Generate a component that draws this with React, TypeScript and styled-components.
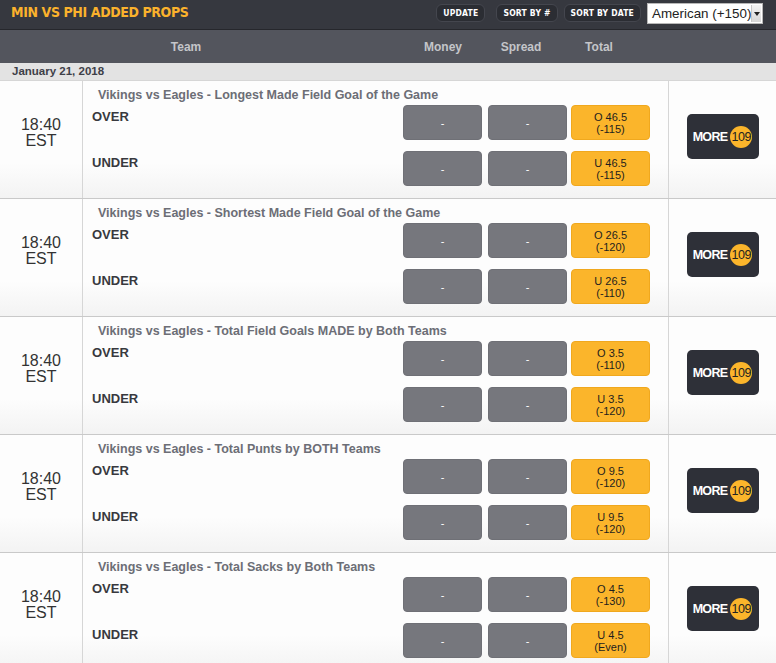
import React from "react";
import styled, { createGlobalStyle } from "styled-components";

const GlobalStyle = createGlobalStyle`
  body {
    margin: 0;
    background: #fafafa;
    font-family: "Liberation Sans", Arial, sans-serif;
  }
`;

const TopBar = styled.div`
  height: 29px;
  background: #36383f;
  border-bottom: 1px solid #26272c;
  display: flex;
  align-items: center;
  padding: 0 13px 0 11px;
`;

const PageTitle = styled.h1`
  margin: 0;
  flex: 1;
  font-family: "DejaVu Sans Condensed", "DejaVu Sans", sans-serif;
  font-weight: bold;
  font-size: 14px;
  letter-spacing: -0.4px;
  color: #fbb22c;
  margin-top: -6px;
`;

const BarButton = styled.button<{ $gap: number }>`
  height: 18px;
  margin-left: ${(p) => p.$gap}px;
  margin-top: -3px;
  padding: 0 6px;
  background: #2b2d33;
  border: 1px solid #44464e;
  border-radius: 6px;
  color: #fff;
  font-family: "DejaVu Sans Condensed", "DejaVu Sans", sans-serif;
  font-weight: bold;
  font-size: 8.5px;
  letter-spacing: 0.2px;
`;

const Select = styled.div`
  margin-left: 6px;
  margin-top: -2px;
  width: 116px;
  height: 21px;
  box-sizing: border-box;
  background: #fff;
  border: 1px solid #b8b8b8;
  display: flex;
  align-items: center;
  font-size: 13.4px;
  color: #222;
  padding-left: 4px;
  white-space: nowrap;
`;

const SelectText = styled.span`
  flex: 1;
`;

const SelectArrow = styled.span`
  width: 13px;
  height: 17px;
  margin-right: 1px;
  background: linear-gradient(#f4f4f4, #d6d6d6);
  border-left: 1px solid #c8c8c8;
  display: flex;
  align-items: center;
  justify-content: center;
  &::after {
    content: "";
    border-left: 3.5px solid transparent;
    border-right: 3.5px solid transparent;
    border-top: 4px solid #222;
  }
`;

const HeaderRow = styled.div`
  height: 33px;
  background: #53555d;
  display: grid;
  grid-template-columns: 372px 32px 78px 78px 78px 1fr;
  align-items: center;
  color: #c4c5c9;
  font-weight: bold;
  font-size: 12px;
`;

const HeadCell = styled.div<{ $col: number }>`
  grid-column: ${(p) => p.$col};
  text-align: center;
`;

const DateRow = styled.div`
  height: 17px;
  background: #e3e3e3;
  border-bottom: 1px solid #d6d6d6;
  padding-left: 12px;
  font-size: 11.5px;
  font-weight: bold;
  color: #3e4048;
  line-height: 17px;
`;

const Row = styled.div`
  height: 118px;
  box-sizing: border-box;
  display: flex;
  border-bottom: 1px solid #c9c9c9;
  background: linear-gradient(#fdfdfd 70%, #f3f3f3);
`;

const TimeCell = styled.div`
  width: 82px;
  border-right: 1px solid #d6d6d6;
  text-align: center;
  padding-top: 36px;
  font-size: 16px;
  line-height: 16px;
  color: #333;
`;

const PropCell = styled.div`
  flex: 1;
  border-right: 1px solid #d6d6d6;
  padding: 6px 18px 0 9px;
`;

const PropTitle = styled.div`
  padding-left: 6px;
  line-height: 16px;
  margin-bottom: 2px;
  font-size: 12.5px;
  font-weight: bold;
  color: #6c6e76;
`;

const Line = styled.div`
  display: flex;
  height: 35px;
  margin-bottom: 11px;
`;

const LineLabel = styled.div`
  flex: 1;
  padding-top: 4px;
  font-size: 13px;
  font-weight: bold;
  color: #38393e;
`;

const OddsButton = styled.div<{ $hot?: boolean; $gap: number }>`
  width: 79px;
  margin-left: ${(p) => p.$gap}px;
  box-sizing: border-box;
  border-radius: 4px;
  background: ${(p) => (p.$hot ? "#fbb52b" : "#76777d")};
  border: 1px solid ${(p) => (p.$hot ? "#f0a81e" : "#6f7076")};
  color: ${(p) => (p.$hot ? "#1e1e1e" : "#fff")};
  display: flex;
  flex-direction: column;
  align-items: center;
  justify-content: center;
  font-size: 11px;
  line-height: 12px;
`;

const MoreCell = styled.div`
  width: 107px;
  display: flex;
  align-items: center;
  justify-content: center;
  padding-bottom: 6px;
`;

const MoreButton = styled.div`
  width: 72px;
  height: 45px;
  border-radius: 5px;
  background: #2e3038;
  display: flex;
  align-items: center;
  justify-content: center;
  gap: 3px;
  color: #fff;
  font-weight: bold;
  font-size: 12.5px;
  letter-spacing: -0.7px;
`;

const Count = styled.span`
  width: 22px;
  height: 22px;
  border-radius: 50%;
  background: #fbb52b;
  color: #222;
  font-weight: normal;
  font-size: 12.5px;
  letter-spacing: -0.4px;
  display: flex;
  align-items: center;
  justify-content: center;
`;

type Prop = { title: string; over: [string, string]; under: [string, string] };

const props: Prop[] = [
  { title: "Vikings vs Eagles - Longest Made Field Goal of the Game", over: ["O 46.5", "(-115)"], under: ["U 46.5", "(-115)"] },
  { title: "Vikings vs Eagles - Shortest Made Field Goal of the Game", over: ["O 26.5", "(-120)"], under: ["U 26.5", "(-110)"] },
  { title: "Vikings vs Eagles - Total Field Goals MADE by Both Teams", over: ["O 3.5", "(-110)"], under: ["U 3.5", "(-120)"] },
  { title: "Vikings vs Eagles - Total Punts by BOTH Teams", over: ["O 9.5", "(-120)"], under: ["U 9.5", "(-120)"] },
  { title: "Vikings vs Eagles - Total Sacks by Both Teams", over: ["O 4.5", "(-130)"], under: ["U 4.5", "(Even)"] },
];

function OddsLine({ label, total }: { label: string; total: [string, string] }) {
  return (
    <Line>
      <LineLabel>{label}</LineLabel>
      <OddsButton $gap={0}>-</OddsButton>
      <OddsButton $gap={6}>-</OddsButton>
      <OddsButton $gap={4} $hot>
        <span>{total[0]}</span>
        <span>{total[1]}</span>
      </OddsButton>
    </Line>
  );
}

export default function App() {
  return (
    <>
      <GlobalStyle />
      <TopBar>
        <PageTitle>MIN VS PHI ADDED PROPS</PageTitle>
        <BarButton $gap={0}>UPDATE</BarButton>
        <BarButton $gap={11}>SORT BY #</BarButton>
        <BarButton $gap={6}>SORT BY DATE</BarButton>
        <Select>
          <SelectText>American (+150)</SelectText>
          <SelectArrow />
        </Select>
      </TopBar>
      <HeaderRow>
        <HeadCell $col={1}>Team</HeadCell>
        <HeadCell $col={3}>Money</HeadCell>
        <HeadCell $col={4}>Spread</HeadCell>
        <HeadCell $col={5}>Total</HeadCell>
      </HeaderRow>
      <DateRow>January 21, 2018</DateRow>
      {props.map((p) => (
        <Row key={p.title}>
          <TimeCell>
            18:40
            <br />
            EST
          </TimeCell>
          <PropCell>
            <PropTitle>{p.title}</PropTitle>
            <OddsLine label="OVER" total={p.over} />
            <OddsLine label="UNDER" total={p.under} />
          </PropCell>
          <MoreCell>
            <MoreButton>
              <span>MORE</span>
              <Count>109</Count>
            </MoreButton>
          </MoreCell>
        </Row>
      ))}
    </>
  );
}
